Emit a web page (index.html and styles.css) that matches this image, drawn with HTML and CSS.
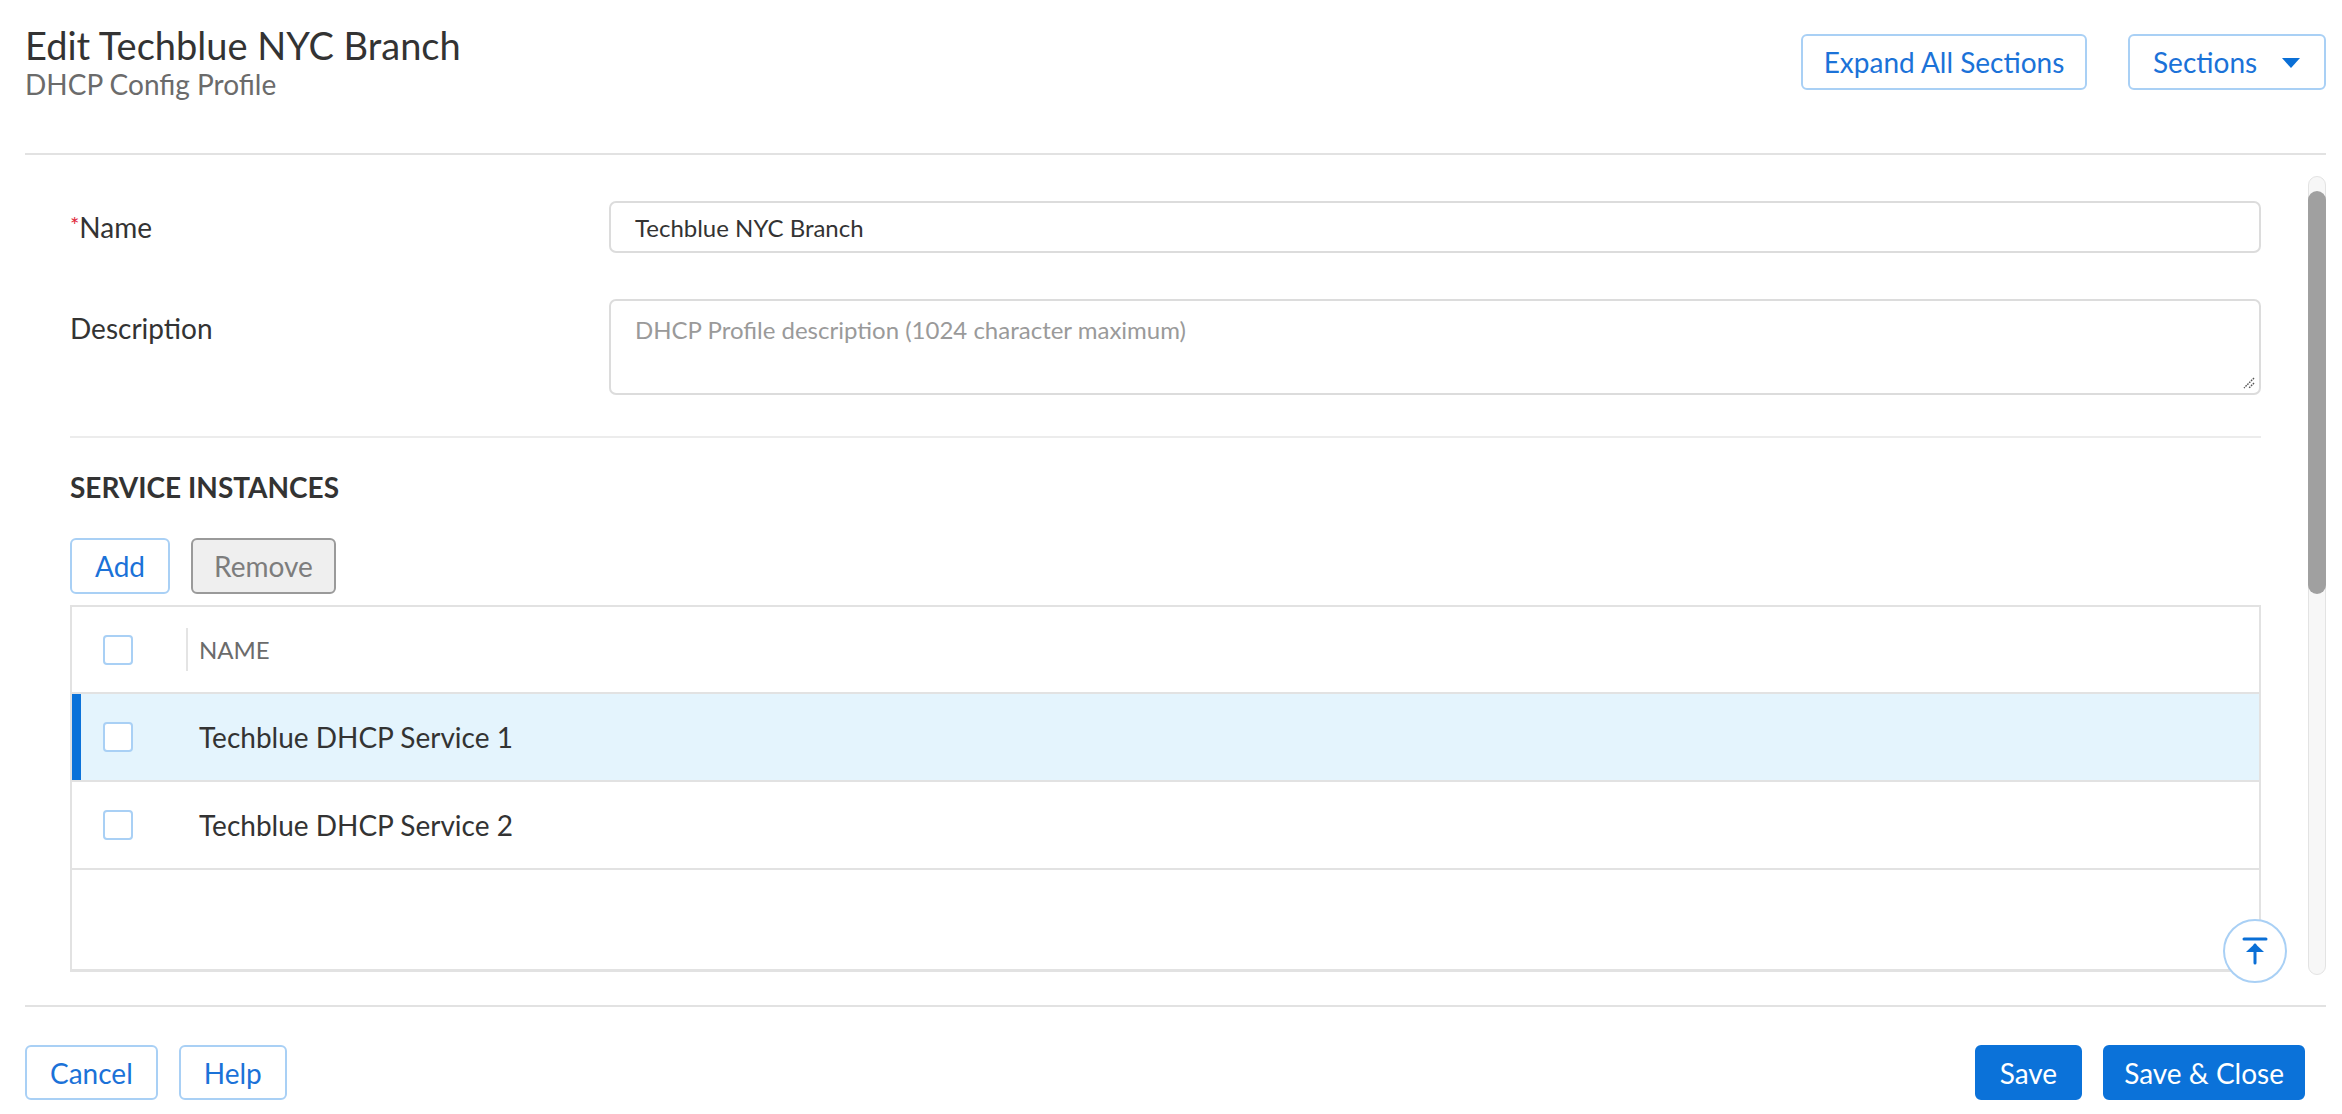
FILE: index.html
```html
<!DOCTYPE html>
<html lang="en">
<head>
<meta charset="utf-8">
<title>Edit Techblue NYC Branch</title>
<link rel="stylesheet" href="styles.css">
</head>
<body>
<div class="page">
  <header class="page-header">
    <div class="titles">
      <h1 class="title">Edit Techblue NYC Branch</h1>
      <div class="subtitle">DHCP Config Profile</div>
    </div>
    <div class="header-actions">
      <button class="btn btn-outline btn-expand">Expand All Sections</button>
      <button class="btn btn-outline btn-sections">Sections <span class="caret"></span></button>
    </div>
  </header>

  <div class="body-wrap">
    <main class="content">
      <div class="form-row">
        <label class="form-label"><span class="req">*</span>Name</label>
        <div class="form-field"><div class="input">Techblue NYC Branch</div></div>
      </div>
      <div class="form-row form-row-top">
        <label class="form-label label-top">Description</label>
        <div class="form-field">
          <div class="textarea">
            <span class="placeholder">DHCP Profile description (1024 character maximum)</span>
            <svg class="resize" width="14" height="14" viewBox="0 0 14 14"><path d="M13 3 L3 13 M13 8 L8 13" stroke="#555" stroke-width="1.4" stroke-dasharray="1.6 1" fill="none"/></svg>
          </div>
        </div>
      </div>

      <section class="section">
        <h2 class="section-title">SERVICE INSTANCES</h2>
        <div class="toolbar">
          <button class="btn btn-outline btn-sm">Add</button>
          <button class="btn btn-disabled btn-sm btn-remove">Remove</button>
        </div>
        <div class="table">
          <div class="trow thead">
            <div class="cell-check"><span class="checkbox"></span></div>
            <div class="cell-name head-name">NAME</div>
          </div>
          <div class="trow selected">
            <div class="cell-check"><span class="checkbox"></span></div>
            <div class="cell-name">Techblue DHCP Service 1</div>
          </div>
          <div class="trow">
            <div class="cell-check"><span class="checkbox"></span></div>
            <div class="cell-name">Techblue DHCP Service 2</div>
          </div>
          <div class="tempty"></div>
          <button class="to-top" aria-label="Scroll to top">
            <svg width="26" height="28" viewBox="0 0 26 28"><path d="M2 2 H24" stroke="#0a6fd6" stroke-width="3" stroke-linecap="round"/><path d="M13 26 V8" stroke="#0a6fd6" stroke-width="3" stroke-linecap="round"/><path d="M13 6.5 L22 15 L4 15 Z" fill="#0a6fd6"/></svg>
          </button>
        </div>
      </section>
    </main>
    <div class="scrollbar"><div class="thumb"></div></div>
  </div>

  <footer class="page-footer">
    <div class="footer-left">
      <button class="btn btn-outline">Cancel</button>
      <button class="btn btn-outline">Help</button>
    </div>
    <div class="footer-right">
      <button class="btn btn-primary">Save</button>
      <button class="btn btn-primary btn-save-close">Save &amp; Close</button>
    </div>
  </footer>
</div>
</body>
</html>
```

FILE: styles.css
```css
* { box-sizing: border-box; }
html, body { margin: 0; padding: 0; background: #fff; }
body {
  font-family: Lato, "Open Sans", "Liberation Sans", sans-serif;
  color: #333;
  width: 2342px;
  height: 1114px;
  overflow: hidden;
}
.page {
  padding: 0 16px 0 25px;
  display: flex;
  flex-direction: column;
  height: 1114px;
}
.page-header {
  height: 155px;
  border-bottom: 2px solid #e2e2e2;
  display: flex;
  justify-content: space-between;
  align-items: flex-start;
}
.title {
  margin: 22px 0 0 0;
  font-size: 38px;
  font-weight: 400;
  line-height: 46px;
  color: #333;
}
.subtitle {
  font-size: 28px;
  line-height: 30px;
  color: #6b6b6b;
  margin-top: 1px;
}
.header-actions {
  display: flex;
  gap: 41px;
  margin-top: 34px;
}
.btn {
  font-family: inherit;
  font-size: 28px;
  height: 56px;
  padding: 0 23px;
  border-radius: 6px;
  background: #fff;
  cursor: pointer;
  display: inline-flex;
  align-items: center;
  justify-content: center;
  line-height: 1;
}
.btn-outline {
  border: 2px solid #a9d0f5;
  color: #1b72d8;
}
.btn-expand { width: 286px; padding: 0; }
.btn-sections { width: 198px; justify-content: flex-start; padding-left: 23px; }
.caret {
  width: 0; height: 0;
  border-left: 9px solid transparent;
  border-right: 9px solid transparent;
  border-top: 10px solid #0a6fd6;
  margin-left: 25px;
  margin-top: 2px;
}
.btn-sm { height: 56px; padding: 0 23px; }
.btn-remove { padding: 0 21px; }
.btn-disabled {
  border: 2px solid #9a9a9a;
  background: #efefef;
  color: #7d7d7d;
}
.btn-primary {
  background: #0b72d9;
  border: 2px solid #0b72d9;
  color: #fff;
}

.body-wrap {
  flex: 1;
  display: flex;
  min-height: 0;
}
.content {
  flex: 1;
  padding: 46px 47px 0 45px;
  overflow: hidden;
  min-width: 0;
}
.scrollbar {
  width: 18px;
  margin: 21px 0 30px 0;
  border: 1px solid #e3e3e3;
  border-radius: 9px;
  background: #f7f7f7;
  padding-top: 14px;
}
.thumb {
  height: 403px;
  background: #a0a0a0;
  border-radius: 9px;
  margin: 0 -1px;
}

.form-row {
  display: flex;
  align-items: center;
  margin-bottom: 46px;
}
.form-row-top { align-items: flex-start; margin-bottom: 0; }
.form-label {
  width: 539px;
  flex: none;
  font-size: 28px;
  color: #333;
}
.label-top { padding-top: 12px; }
.req { color: #e0263a; font-size: 22px; vertical-align: 5px; }
.form-field { flex: 1; }
.input {
  height: 52px;
  border: 2px solid #dcdcdc;
  border-radius: 7px;
  padding: 0 24px;
  display: flex;
  align-items: center;
  font-size: 24px;
  color: #333;
}
.textarea {
  position: relative;
  height: 96px;
  border: 2px solid #dcdcdc;
  border-radius: 7px;
  padding: 14px 24px;
  font-size: 24px;
}
.placeholder { color: #9a9a9a; }
.resize { position: absolute; right: 4px; bottom: 4px; }

.section {
  margin-top: 41px;
  border-top: 2px solid #ececec;
}
.section-title {
  font-size: 28px;
  font-weight: 700;
  margin: 33px 0 0 0;
  line-height: 32px;
  color: #333;
}
.toolbar {
  display: flex;
  gap: 21px;
  margin-top: 35px;
}
.table {
  position: relative;
  margin-top: 11px;
  border: 2px solid #e2e2e2;
  border-bottom-width: 3px;
  height: 367px;
}
.trow {
  display: flex;
  align-items: center;
  height: 88px;
  border-bottom: 2px solid #e2e2e2;
  font-size: 28px;
  color: #333;
}
.trow.thead { height: 87px; }
.trow.selected {
  background: #e4f4fd;
  box-shadow: inset 9px 0 0 #0b72d9;
}
.cell-check {
  width: 116px;
  flex: none;
  padding-left: 31px;
  display: flex;
  align-items: center;
  height: 100%;
}
.thead .cell-check { position: relative; }
.thead .cell-check::after {
  content: "";
  position: absolute;
  right: 0;
  top: 21px;
  bottom: 21px;
  width: 2px;
  background: #e4e4e4;
}
.checkbox {
  width: 30px;
  height: 30px;
  border: 2px solid #a9d0f5;
  border-radius: 4px;
  background: #fff;
  display: block;
}
.cell-name { padding-left: 11px; }
.head-name { font-size: 24px; color: #6b6b6b; }
.to-top {
  position: absolute;
  right: -28px;
  bottom: -14px;
  width: 64px;
  height: 64px;
  border-radius: 50%;
  border: 2px solid #a9d0f5;
  background: #fff;
  display: flex;
  align-items: center;
  justify-content: center;
  padding: 0;
}

.page-footer {
  height: 109px;
  border-top: 2px solid #e2e2e2;
  display: flex;
  justify-content: space-between;
  padding-top: 38px;
  padding-right: 21px;
}
.footer-left, .footer-right { display: flex; gap: 21px; }
.page-footer .btn { height: 55px; padding: 0 23px; }
.page-footer .btn-save-close { padding: 0 19px; }
```
